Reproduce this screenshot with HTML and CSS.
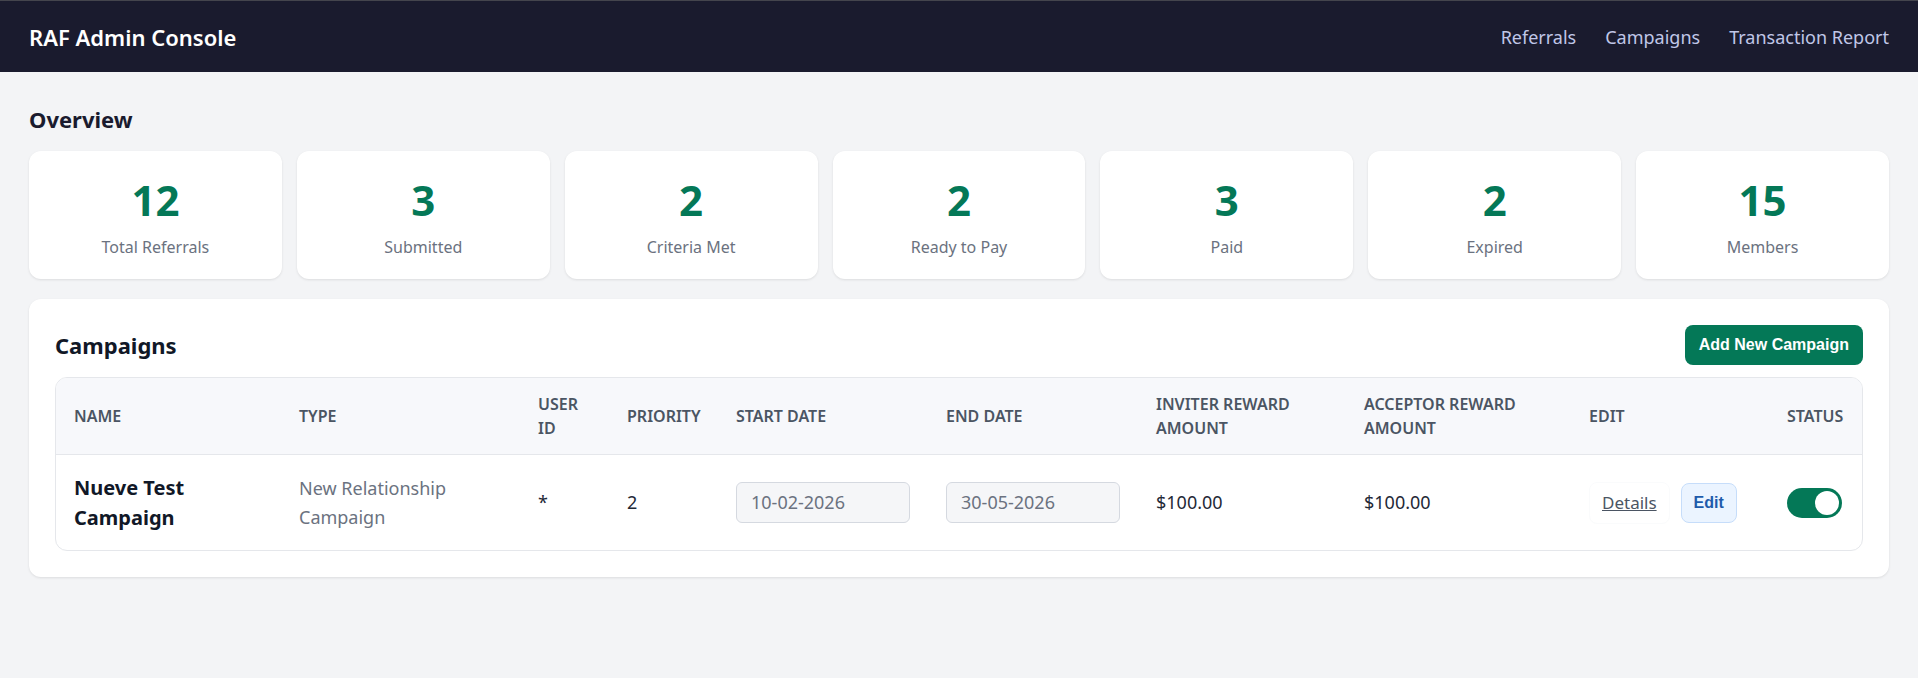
FILE: index.html
```html
<!DOCTYPE html>
<html lang="en">
<head>
<meta charset="utf-8">
<title>RAF Admin Console</title>
<link rel="stylesheet" href="styles.css">
</head>
<body>
<header class="topbar">
  <h1 class="brand">RAF Admin Console</h1>
  <nav class="nav">
    <a href="#">Referrals</a>
    <a href="#">Campaigns</a>
    <a href="#">Transaction Report</a>
  </nav>
</header>

<main class="page">
  <h2 class="section-title">Overview</h2>
  <div class="stats">
    <div class="stat"><div class="stat-value">12</div><div class="stat-label">Total Referrals</div></div>
    <div class="stat"><div class="stat-value">3</div><div class="stat-label">Submitted</div></div>
    <div class="stat"><div class="stat-value">2</div><div class="stat-label">Criteria Met</div></div>
    <div class="stat"><div class="stat-value">2</div><div class="stat-label">Ready to Pay</div></div>
    <div class="stat"><div class="stat-value">3</div><div class="stat-label">Paid</div></div>
    <div class="stat"><div class="stat-value">2</div><div class="stat-label">Expired</div></div>
    <div class="stat"><div class="stat-value">15</div><div class="stat-label">Members</div></div>
  </div>

  <section class="panel">
    <div class="panel-head">
      <h2 class="panel-title">Campaigns</h2>
      <button class="btn-primary" type="button">Add New Campaign</button>
    </div>
    <div class="table-wrap">
      <table>
        <colgroup>
          <col class="c-name"><col class="c-type"><col class="c-user"><col class="c-prio">
          <col class="c-date"><col class="c-date"><col class="c-inviter"><col class="c-acceptor">
          <col class="c-edit"><col class="c-status">
        </colgroup>
        <thead>
          <tr>
            <th>Name</th>
            <th>Type</th>
            <th>User ID</th>
            <th>Priority</th>
            <th>Start Date</th>
            <th>End Date</th>
            <th>Inviter Reward Amount</th>
            <th>Acceptor Reward Amount</th>
            <th>Edit</th>
            <th>Status</th>
          </tr>
        </thead>
        <tbody>
          <tr>
            <td class="name">Nueve Test Campaign</td>
            <td class="muted">New Relationship Campaign</td>
            <td>*</td>
            <td>2</td>
            <td><input class="date-field" type="text" value="10-02-2026" readonly></td>
            <td><input class="date-field" type="text" value="30-05-2026" readonly></td>
            <td>$100.00</td>
            <td>$100.00</td>
            <td>
              <div class="actions">
                <a class="link-btn" href="#">Details</a>
                <button class="btn-soft" type="button">Edit</button>
              </div>
            </td>
            <td><span class="switch is-on"><span class="knob"></span></span></td>
          </tr>
        </tbody>
      </table>
    </div>
  </section>
</main>
</body>
</html>
```

FILE: styles.css
```css
* { box-sizing: border-box; }

body {
  margin: 0;
  background: #f3f4f6;
  font-family: "Noto Sans", "Open Sans", Arial, sans-serif;
  color: #1f2937;
}

/* top navigation bar */
.topbar {
  height: 72px;
  border-top: 1px solid #44454d;
  background: #1a1b2e;
  display: flex;
  align-items: center;
  justify-content: space-between;
  padding: 0 29px;
}

.brand {
  margin: 0;
  font-size: 22px;
  font-weight: 600;
  color: #ffffff;
}

.nav {
  display: flex;
  gap: 29px;
}

.nav a {
  color: #c0c7e8;
  text-decoration: none;
  font-size: 18px;
}

/* page body */
.page {
  padding: 31px 29px;
}

.section-title {
  margin: 0 0 15px;
  font-size: 22px;
  line-height: 33px;
  font-weight: 700;
  color: #1a1b2e;
}

/* overview counters */
.stats {
  display: grid;
  grid-template-columns: repeat(7, 1fr);
  gap: 15px;
}

.stat {
  background: #ffffff;
  border-radius: 12px;
  box-shadow: 0 1px 3px rgba(0, 0, 0, 0.07), 0 1px 2px rgba(0, 0, 0, 0.03);
  padding: 24px 16px 20px;
  text-align: center;
}

.stat-value {
  font-size: 42px;
  line-height: 1.2;
  font-weight: 700;
  color: #047857;
}

.stat-label {
  margin-top: 10px;
  font-size: 16px;
  line-height: 24px;
  color: #6b7280;
}

/* campaigns panel */
.panel {
  margin-top: 20px;
  background: #ffffff;
  border-radius: 12px;
  box-shadow: 0 1px 3px rgba(0, 0, 0, 0.07), 0 1px 2px rgba(0, 0, 0, 0.03);
  padding: 26px;
}

.panel-head {
  display: flex;
  align-items: center;
  justify-content: space-between;
  margin-bottom: 12px;
}

.panel-title {
  margin: 0;
  font-size: 22px;
  font-weight: 700;
  color: #111827;
}

.btn-primary {
  font-family: "Liberation Sans", Arial, sans-serif;
  font-size: 16px;
  font-weight: 700;
  line-height: 18px;
  padding: 11px 14px;
  background: #047857;
  color: #ffffff;
  border: 0;
  border-radius: 8px;
}

.table-wrap {
  border: 1px solid #e5e7eb;
  border-radius: 12px;
  overflow: hidden;
}

table {
  width: 100%;
  border-collapse: collapse;
  table-layout: fixed;
}

.c-name { width: 225px; }
.c-type { width: 239px; }
.c-user { width: 89px; }
.c-prio { width: 109px; }
.c-date { width: 210px; }
.c-inviter { width: 208px; }
.c-acceptor { width: 225px; }
.c-edit { width: 198px; }
.c-status { width: 93px; }

th {
  background: #f7f8fb;
  text-align: left;
  vertical-align: middle;
  font-size: 16px;
  line-height: 24px;
  font-weight: 600;
  text-transform: uppercase;
  color: #4b5563;
  padding: 14px 18px;
  border-bottom: 1px solid #e5e7eb;
}

td {
  padding: 17.5px 18px;
  font-size: 18px;
  line-height: 28.8px;
  vertical-align: middle;
  color: #1f2937;
}

td.name {
  font-size: 20px;
  line-height: 30px;
  font-weight: 700;
  color: #111827;
}

td.muted { color: #6b7280; }

.date-field {
  display: block;
  width: 100%;
  font-family: "Noto Sans", "Open Sans", Arial, sans-serif;
  font-size: 18px;
  line-height: 25px;
  padding: 7px 14px;
  color: #6b7280;
  background: #f5f6f8;
  border: 1px solid #d5d9e0;
  border-radius: 6px;
  outline: none;
}

.actions {
  display: flex;
  align-items: center;
  gap: 11px;
}

.link-btn {
  display: inline-block;
  font-size: 17px;
  line-height: 24px;
  padding: 8px 12px;
  border: 1px solid #fafbfc;
  border-radius: 8px;
  color: #4b5563;
  text-decoration: underline;
}

.btn-soft {
  font-family: "Liberation Sans", Arial, sans-serif;
  font-size: 16px;
  font-weight: 700;
  line-height: 18px;
  padding: 10px 12px;
  background: #ebf4ff;
  color: #1e5bab;
  border: 1px solid #c6ddfa;
  border-radius: 8px;
}

/* status toggle */
.switch {
  position: relative;
  display: block;
  width: 55px;
  height: 30px;
  border-radius: 15px;
  background: #d1d5db;
}

.switch.is-on { background: #047857; }

.knob {
  position: absolute;
  top: 3px;
  right: 3px;
  width: 24px;
  height: 24px;
  border-radius: 50%;
  background: #ffffff;
}
```
